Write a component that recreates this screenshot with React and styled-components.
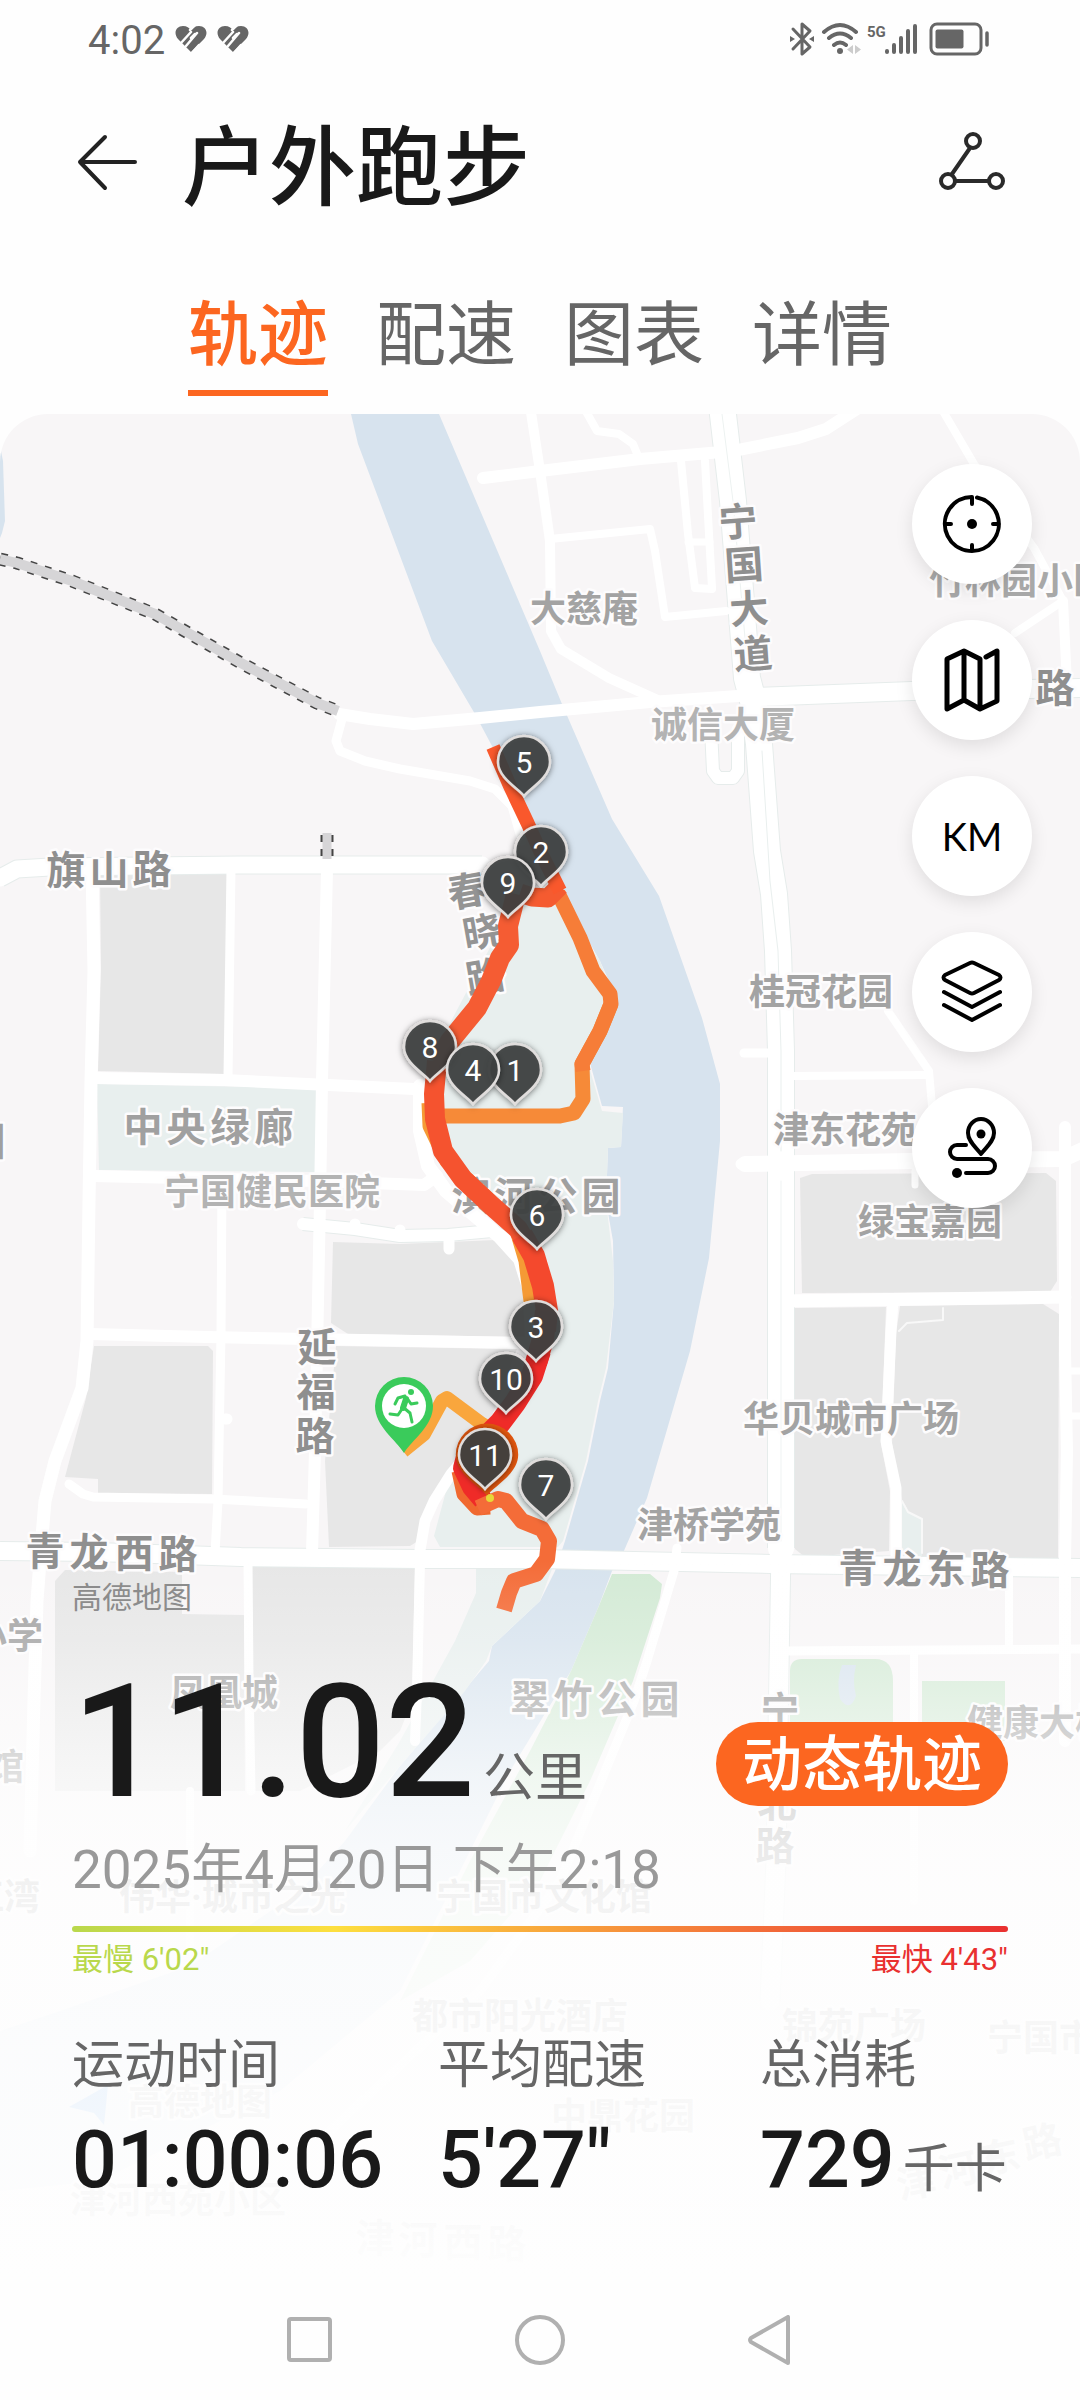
import React from "react";
import styled, { createGlobalStyle, css } from "styled-components";

const sans = `Roboto, "Noto Sans CJK SC", sans-serif`;

const GlobalStyle = createGlobalStyle`
  * { box-sizing: border-box; }
  body { margin: 0; background: #fefefe; font-family: ${sans}; color: #191919; }
  button { margin: 0; padding: 0; border: 0; background: none; font: inherit; color: inherit; cursor: pointer; }
  svg { display: block; }
`;

const Page = styled.div`
  min-height: 100vh;
  display: flex;
  flex-direction: column;
`;

/* ---------- status bar ---------- */

const StatusBar = styled.div`
  display: flex;
  align-items: center;
  justify-content: space-between;
  height: 78px;
  padding: 0 88px;
  color: #666;
`;

const StatusGroup = styled.div`
  display: flex;
  align-items: center;
  gap: ${(p) => p.$gap}px;
`;

const Clock = styled.span`
  padding-top: 4px;
  font-size: 40px;
  line-height: 48px;
`;

const HeartIcon = () => (
  <svg width="32" height="28" viewBox="0 0 32 28">
    <path fill="#666" d="M16 27 L3 14 C-2 8 1 1 8 1 C12 1 14 3 16 5 C18 3 20 1 24 1 C31 1 34 8 29 14Z" />
    <path fill="none" stroke="#fefefe" strokeWidth="2.500" strokeLinecap="round" d="M6 18 L16 7 M11 21 L22 8 M16 13 L20 9 M24 20 L16 29 M19 1 L15 5" />
  </svg>
);

const SystemIcons = () => (
  <svg width="202" height="36" viewBox="790 21 202 36" fill="none" stroke="#666" strokeLinecap="round" strokeLinejoin="round">
    <path strokeWidth="3" d="M793 29 L810 47 L802 54 V24 L810 31 L793 49" />
    <path fill="#666" stroke="none" d="M790 36 l5 3 l-5 3z M814 36 l-5 3 l5 3z" />
    <path strokeWidth="4" d="M824 32 Q840 18 856 32 M829 38 Q840 29 851 38 M834 45 Q840 40 846 45" />
    <circle cx="840" cy="51" r="3" fill="#666" stroke="none" />
    <path fill="#ccc" stroke="none" d="M853 45 v9 l-6 -4.500z M855 45 v9 l6 -4.500z" />
    <text x="867" y="37" fontFamily="Roboto, sans-serif" fontSize="15" fontWeight="700" fill="#666" stroke="none">5G</text>
    <path strokeWidth="4" d="M887 51 V52 M894 45 V52 M901 38 V52 M908 31 V52 M915 26 V52" />
    <rect x="931" y="24" width="50" height="30" rx="6" strokeWidth="3" />
    <rect x="935.500" y="29.500" width="28" height="19" rx="2" fill="#666" stroke="none" />
    <path strokeWidth="3.500" d="M987 33 V45" />
  </svg>
);

/* ---------- header and tabs ---------- */

const Header = styled.header`
  display: flex;
  align-items: center;
  gap: 40px;
  height: 172px;
  padding: 0 72px;
`;

const Title = styled.h1`
  flex: 1;
  margin: 0;
  padding-top: 10px;
  font-size: 87px;
  line-height: 120px;
  font-weight: 500;
`;

const IconButton = styled.button`
  display: grid;
  place-items: center;
  width: 70px;
  height: 70px;
`;

const Tabs = styled.nav`
  display: flex;
  justify-content: center;
  gap: 48px;
  padding: 36px 24px 18px;
`;

const Tab = styled.button`
  padding-bottom: 4px;
  border-bottom: 6px solid transparent;
  font-size: 70px;
  line-height: 100px;
  color: #666;
  ${(p) =>
    p.$active &&
    css`
      color: #fc6620;
      font-weight: 500;
      border-image: linear-gradient(#fc6620, #fc6620) 1;
    `}
`;

/* ---------- map stage ---------- */

const Stage = styled.main`
  position: relative;
  flex: 1;
  display: flex;
  flex-direction: column;
  padding-top: 50px;
  border-radius: 48px 48px 0 0;
  overflow: hidden;
  background: #f8f6f7;
`;

const Backdrop = styled.div`
  position: absolute;
  inset: 0;
  svg { width: 100%; height: 100%; }
`;

const Tools = styled.div`
  position: relative;
  align-self: flex-end;
  display: flex;
  flex-direction: column;
  gap: 36px;
  margin-right: 48px;
`;

const ToolButton = styled.button`
  display: grid;
  place-items: center;
  width: 120px;
  height: 120px;
  border-radius: 50%;
  background: #fff;
  color: #000;
  box-shadow: 0 6px 18px rgba(0, 0, 0, 0.1);
  font-family: Lato, sans-serif;
  font-size: 38px;
`;

/* ---------- summary panel ---------- */

const Summary = styled.section`
  position: relative;
  margin-top: auto;
  padding: 0 72px 80px;
`;

const Attribution = styled.div`
  font-size: 30px;
  line-height: 40px;
  color: #8c8c8c;
`;

const DistanceRow = styled.div`
  display: flex;
  align-items: flex-end;
  justify-content: space-between;
  margin-top: 44px;
`;

const Distance = styled.div`
  display: flex;
  align-items: baseline;
  gap: 8px;
  height: 160px;
`;

const DistanceValue = styled.span`
  font-size: 158px;
  line-height: 160px;
  font-weight: 500;
`;

const Unit = styled.span`
  font-size: 52px;
  line-height: 64px;
  color: #666;
`;

const PlayButton = styled.button`
  height: 84px;
  margin-bottom: 16px;
  padding: 4px 26px 0;
  border-radius: 42px;
  background: #fc6620;
  color: #fff;
  font-size: 60px;
  line-height: 80px;
  font-weight: 500;
`;

const DateLine = styled.time`
  display: block;
  margin-top: 16px;
  font-size: 53px;
  line-height: 64px;
  color: #999;
`;

const PaceBar = styled.div`
  height: 6px;
  margin-top: 24px;
  border-radius: 3px;
  background: linear-gradient(90deg, #b9d84c, #fddf3f 28%, #f8a43c 52%, #f3703a 72%, #e93030);
`;

const PaceLegend = styled.div`
  display: flex;
  justify-content: space-between;
  margin-top: 8px;
  font-size: 31px;
  line-height: 40px;
`;

const PaceLabel = styled.span`
  color: ${(p) => p.$color};
`;

const Stats = styled.dl`
  display: grid;
  grid-template-columns: 366fr 322fr 248fr;
  margin: 54px 0 0;
`;

const StatLabel = styled.dt`
  font-size: 52px;
  line-height: 64px;
  color: #666;
`;

const StatValue = styled.dd`
  display: flex;
  align-items: baseline;
  gap: 8px;
  height: 80px;
  margin: 22px 0 0;
  font-size: 79px;
  line-height: 80px;
  font-weight: 500;
  white-space: nowrap;
  ${Unit} { font-weight: 400; }
`;

const SystemNav = styled.nav`
  display: flex;
  justify-content: center;
  align-items: center;
  gap: 180px;
  height: 120px;
`;

const NavButton = styled.button`
  width: 50px;
  height: 50px;
`;

/* ---------- map data ---------- */

const GREY = "#e7e7e7";
const PARK = "#e8efee";
const WATER = "#d7e3ee";
const GREEN = "#d3ead5";

const areas = [
  [WATER, "351,413 358,443 432,640 475,713 492,745 520,800 545,860 566,900 600,960 618,1000 590,1062 602,1105 623,1106 621,1146 608,1147 606,1200 613,1240 614,1300 608,1367 600,1400 588,1460 565,1540 555,1570 540,1600 492,1645 489,1660 400,1765 345,1840 300,1890 190,1965 60,2010 0,2030 0,2190 100,2180 280,2090 400,1990 510,1770 571,1670 598,1607 612,1570 623,1552 647,1497 690,1350 709,1257 720,1140 720,1083 702,1017 659,895 612,818 562,703 540,650 439,413"],
  [WATER, "0,445 3,460 5,520 2,532 0,537"],
  [PARK, "512,905 560,900 600,960 615,1000 588,1062 602,1110 623,1112 621,1146 608,1147 606,1200 613,1260 614,1300 606,1367 598,1400 586,1460 563,1540 558,1546 440,1546 434,1535 446,1490 470,1450 553,1320 548,1260 500,1215 450,1170 432,1120 430,1060"],
  [PARK, "476,1568 552,1568 540,1600 492,1645 486,1660 465,1690 400,1765 345,1830 400,1740 455,1640 476,1592"],
  [GREEN, "612,1573 650,1573 662,1583 660,1597 633,1680 590,1780 540,1880 470,1960 400,2000 470,1860 530,1750 571,1670 598,1607"],
  [GREY, "100,873 227,873 225,1073 98,1070 101,967"],
  [PARK, "97,1083 316,1087 316,1171 99,1169"],
  [GREY, "333,1241 400,1243 496,1239 520,1263 530,1300 530,1336 348,1333 331,1322"],
  [GREY, "94,1345 208,1345 213,1350 212,1493 98,1492 98,1478 65,1476 86,1397"],
  [GREY, "336,1345 517,1348 490,1420 451,1470 434,1500 418,1540 410,1545 329,1546 325,1460"],
  [GREY, "65,1569 182,1571 182,1613 244,1614 245,1790 55,1790 55,1580"],
  [GREY, "252,1563 415,1565 412,1700 400,1730 380,1750 300,1790 252,1790"],
  [GREY, "800,1177 812,1173 1046,1172 1056,1180 1057,1280 1050,1291 802,1292"],
  [GREY, "795,1307 886,1306 881,1443 890,1490 889,1550 805,1556 795,1548"],
  [GREY, "900,1305 1043,1303 1059,1313 1058,1557 922,1557 902,1500 892,1443 896,1333"],
  [PARK, "902,1500 908,1511 922,1518 922,1557 902,1557"],
];

const cased = [
  [17, "0,877 17,868 50,866 240,864 482,864"],
  [18, "0,1550 96,1551 241,1556 420,1558 540,1558 771,1563 1080,1567"],
  [18, "753,696 912,690 1080,687"],
  [12, "711,728 713,770 718,777 733,777 738,770 738,728"],
  [26, "722,405 733,500 747,677 753,700 759,743 767,850 774,893 778,950 781,1050 781,1547"],
  [19, "781,1547 779,1667 776,1860 770,2000"],
  [12, "303,1223 355,1228 400,1235 448,1234 492,1230 512,1240"],
];

const roads = [
  [12, "339,713 370,718 413,723 480,717 540,711 650,701 753,694"],
  [9, "342,718 336,740 340,750 365,760 400,768 470,780 495,788 512,805 522,840"],
  [10, "455,864 530,864"],
  [13, "92,868 94,970 91,1080 89,1200 87,1340 82,1387 55,1460 45,1500 41,1547 37,1600 34,1700 30,1850"],
  [9, "231,868 228,1075"],
  [12, "327,868 322,1080 320,1200 318,1300 315,1450 312,1552"],
  [9, "222,1180 221,1333 218,1500 215,1552"],
  [12, "95,1077 224,1079 414,1088"],
  [12, "93,1175 317,1180 424,1184 437,1175"],
  [14, "420,1085 420,1130 428,1165 446,1190 500,1236 520,1258 530,1290 532,1340"],
  [12, "90,1333 207,1336 525,1342"],
  [9, "69,1483 83,1493 93,1496 213,1498 306,1503"],
  [9, "248,1560 249,1680 251,1790"],
  [10, "420,1560 417,1690 415,1740"],
  [11, "419,1555 425,1520 434,1500 451,1473 470,1450"],
  [12, "483,477 540,470 640,458 733,450 798,437 826,428 857,408"],
  [10, "530,405 540,470 550,540 551,630 561,648 609,677 660,700"],
  [8, "583,405 597,430 619,433 633,443 638,455"],
  [8, "681,460 688,533 695,587 712,588"],
  [8, "705,460 709,533 712,587"],
  [7, "688,541 710,541"],
  [8, "550,538 650,528 655,550 665,616 726,610"],
  [8, "940,405 974,463 1034,547 1063,600 1015,632"],
  [10, "1063,600 1067,683"],
  [8, "888,1010 929,1070 932,1105"],
  [8, "793,1075 929,1074"],
  [9, "744,1052 769,1052"],
  [16, "745,1163 912,1160 1063,1158 1085,1148"],
  [12, "1065,1126 1065,1350 1067,1450 1065,1560 1065,1740"],
  [13, "781,1300 1065,1296"],
  [11, "893,1300 891,1330 886,1440 896,1487 896,1557"],
  [7, "1065,1370 1080,1370"],
  [7, "1065,1415 1080,1415"],
  [9, "785,1650 1080,1648"],
  [8, "1009,1573 1009,1647"],
  [8, "914,1653 914,1900"],
  [9, "677,1547 674,1570 647,1660 634,1700 560,1880 480,1990 330,2130"],
  [8, "190,1790 190,1950"],
  [7, "915,1184 915,1170"],
];

const route = [
  ["#f9a63d", 14, "403,1450 424,1433 442,1400 447,1397 482,1423 500,1434"],
  ["#f59a35", 15, "429,1102 430,1125 447,1160 490,1200 516,1226 526,1260 531,1300"],
  ["#f68a38", 15, "440,1115 560,1115 574,1112 583,1098 582,1063 600,1030 611,1003"],
  ["#f67d38", 15, "583,1070 582,1063 600,1030 611,1003 610,993 593,970 580,937 558,892"],
  ["#f55b30", 19, "560,885 548,897 532,896 520,892"],
  ["#f9582c", 14, "493,746 510,785 528,823 540,850 560,890"],
  ["#f55c33", 20, "516,893 508,925 509,944 500,957 491,980 477,1007 450,1040 437,1062"],
  ["#f5532f", 20, "437,1060 434,1093 435,1118 443,1150 463,1178 492,1205 518,1228 528,1245"],
  ["#f4492d", 22, "522,1234 534,1255 543,1285 547,1310 545,1330"],
  ["#f0692f", 15, "459,1470 464,1493 477,1507 490,1506"],
  ["#f23a29", 22, "546,1310 543,1338 536,1362"],
  ["#ef2b28", 22, "540,1350 532,1375 515,1402 500,1422 480,1442 465,1458"],
  ["#ef2b28", 20, "467,1452 463,1467 472,1486 483,1499"],
  ["#f46c38", 16, "478,1507 498,1498 506,1500 522,1520 542,1528 549,1540 547,1558 536,1573 514,1580 509,1592 504,1609"],
];

const kmPins = [
  [5, 524, 762], [2, 541, 852], [9, 508, 883], [8, 430, 1047], [1, 515, 1070], [4, 473, 1070],
  [6, 537, 1215], [3, 536, 1327], [10, 506, 1379], [7, 546, 1485],
];

const places = [
  ["大慈庵", 530, 608, "#a3a3a3"],
  ["竹林园小区", 929, 580, "#a8a8a8"],
  ["诚信大厦", 651, 724, "#b3b3b3"],
  ["桂冠花园", 749, 991, "#a3a3a3"],
  ["津东花苑", 773, 1129, "#a3a3a3"],
  ["绿宝嘉园", 858, 1221, "#a3a3a3"],
  ["宁国健民医院", 164, 1191, "#b3b3b3"],
  ["华贝城市广场", 743, 1418, "#a3a3a3"],
  ["津桥学苑", 637, 1524, "#a3a3a3"],
  ["小学", -29, 1635, "#a3a3a3"],
  ["凤凰城", 170, 1692, "#a0a0a0"],
  ["馆", -12, 1766, "#a3a3a3"],
  ["健康大楼", 967, 1722, "#a3a3a3"],
  ["江湾", -32, 1896, "#a3a3a3"],
  ["伟华·城市之光", 119, 1896, "#a3a3a3"],
  ["宁国市文化馆", 436, 1896, "#a3a3a3"],
  ["都市阳光酒店", 412, 2015, "#a3a3a3"],
  ["锦苑广场", 782, 2025, "#a3a3a3"],
  ["宁国市", 987, 2037, "#a3a3a3"],
  ["高德地图", 128, 2101, "#a3a3a3"],
  ["中鼎花园", 551, 2115, "#a3a3a3"],
  ["津河西苑小区", 70, 2199, "#a3a3a3"],
];

/* Street and park names run along their road, one anchor per character. */
const streets = [
  ["旗山路", "#8f8f8f", [[66, 868], [109, 868], [152, 867]], 0],
  ["青龙西路", "#8f8f8f", [[45, 1549], [89, 1550], [134, 1551], [178, 1552]], 0],
  ["青龙东路", "#8f8f8f", [[858, 1566], [902, 1567], [946, 1567], [990, 1568]], 0],
  ["宁国大道", "#8f8f8f", [[738, 520], [744, 563], [749, 607], [753, 652]], -4],
  ["延福路", "#8f8f8f", [[317, 1345], [316, 1390], [315, 1434]], 0],
  ["春晓路", "#949494", [[467, 889], [482, 930], [485, 975]], -10],
  ["路", "#8f8f8f", [[1055, 686]], 0],
  ["中央绿廊", "#a0a0a0", [[143, 1125], [186, 1125], [230, 1125], [274, 1125]], 0],
  ["滨河公园", "#a0a0a0", [[471, 1194], [514, 1194], [558, 1194], [601, 1194]], 0],
  ["翠竹公园", "#a0a0a0", [[530, 1697], [573, 1697], [617, 1697], [660, 1697]], 0],
  ["宁国北路", "#8f8f8f", [[780, 1709], [779, 1756], [777, 1801], [775, 1844]], 0],
  ["园", "#a0a0a0", [[-14, 1139]], 0],
  ["津河西路", "#a0a0a0", [[375, 2236], [418, 2238], [463, 2240], [507, 2242]], 0],
  ["津河东路", "#a0a0a0", [[916, 2180], [958, 2168], [1000, 2155], [1042, 2140]], -12],
];

const MapLabel = styled.text`
  font-family: ${sans};
  font-weight: 700;
  font-size: ${(p) => p.$size}px;
  stroke: #fdfcfd;
  stroke-width: 5px;
  stroke-linejoin: round;
  paint-order: stroke;
`;

const PinNumber = styled.text`
  font-family: Roboto, sans-serif;
  font-size: 30px;
  fill: #fff;
  text-anchor: middle;
`;

const pinPath = "M0 33 C-5 26 -26 15 -26 -1 A26 26 0 0 1 26 -1 C26 15 5 26 0 33Z";

const KmPin = ({ n, x, y }) => (
  <g transform={`translate(${x} ${y})`}>
    <path d={pinPath} fill="rgba(62,65,65,0.9)" stroke="#e0dddc" strokeWidth="2.500" filter="url(#pinShadow)" />
    <PinNumber y="10">{n}</PinNumber>
  </g>
);

const TrackMap = () => (
  <svg viewBox="0 413 1080 1866" preserveAspectRatio="xMidYMin slice" role="img" aria-label="轨迹地图">
    <defs>
      <linearGradient id="fade" x1="0" y1="1560" x2="0" y2="2280" gradientUnits="userSpaceOnUse">
        <stop offset="0" stopColor="#fefefe" stopOpacity="0" />
        <stop offset="0.110" stopColor="#fefefe" stopOpacity="0.180" />
        <stop offset="0.200" stopColor="#fefefe" stopOpacity="0.420" />
        <stop offset="0.300" stopColor="#fefefe" stopOpacity="0.680" />
        <stop offset="0.400" stopColor="#fefefe" stopOpacity="0.820" />
        <stop offset="0.470" stopColor="#fefefe" stopOpacity="0.880" />
        <stop offset="0.640" stopColor="#fefefe" stopOpacity="0.920" />
        <stop offset="0.900" stopColor="#fefefe" stopOpacity="0.950" />
        <stop offset="1" stopColor="#fefefe" stopOpacity="1" />
      </linearGradient>
      <filter id="pinShadow" x="-30%" y="-30%" width="160%" height="160%">
        <feDropShadow dx="0" dy="1" stdDeviation="3" floodColor="#000" floodOpacity="0.550" />
      </filter>
    </defs>

    {areas.map(([fill, points], i) => <polygon key={i} fill={fill} points={points} />)}
    <path fill={GREEN} d="M790 1760 V1670 Q790 1658 802 1658 H875 Q893 1658 893 1680 V1760Z M922 1680 H1005 V1740 H922Z" />
    <path fill={WATER} d="M842 1664 H856 Q852 1680 856 1695 Q850 1712 840 1698 Q836 1680 842 1664Z" />

    <g fill="none" strokeLinejoin="round" strokeLinecap="round">
      {cased.map(([w, points], i) => <polyline key={i} points={points} stroke="#e6eceb" strokeWidth={w + 2} strokeLinecap="butt" />)}
      {roads.map(([w, points], i) => <polyline key={i} points={points} stroke="#fff" strokeWidth={w} />)}
      {cased.map(([w, points], i) => <polyline key={i} points={points} stroke="#fff" strokeWidth={w} />)}
      <polyline points="722,413 733,500 747,660" stroke="#edf2f1" strokeWidth="1" />
      <polyline points="762,750 770,880 778,950 781,1050 781,1150" stroke="#e9efee" strokeWidth="1" />
      <polyline points="781,1180 781,1540" stroke="#eff3f3" strokeWidth="1" />
      <path d="M355 1223 V1226 M400 1229 V1232 M449 1240 V1248 M225 1418 H227 M741 1163 H745" stroke="#fff" strokeWidth="11" />
      <path d="M899 1330 L907 1322 L943 1319 V1307 M902 1500 L908 1511 L922 1518 V1552" stroke="#f8f8f8" strokeWidth="2" />
    </g>

    <g fill="none" strokeLinejoin="round">
      <path d="M0 558 L17 562 L72 580 L155 613 L241 662 L317 702 L338 710" stroke="#444" strokeWidth="13" strokeDasharray="7 8" />
      <path d="M0 558 L17 562 L72 580 L155 613 L241 662 L317 702 L338 710" stroke="#d6d5d7" strokeWidth="10" />
      <path d="M327 834 V858" stroke="#444" strokeWidth="13" strokeDasharray="7 7" />
      <path d="M327 832 V858" stroke="#d6d5d7" strokeWidth="9" />
    </g>

    {places.map(([name, x, y, fill]) => (
      <MapLabel key={name} $size={36} x={x} y={y + 13} fill={fill}>{name}</MapLabel>
    ))}
    {streets.map(([name, fill, anchors, angle]) => (
      <g key={name}>
        {anchors.map(([x, y], i) => (
          <MapLabel key={i} $size={39} x={x} y={y + 15} fill={fill} textAnchor="middle" transform={`rotate(${angle} ${x} ${y})`}>
            {name[i]}
          </MapLabel>
        ))}
      </g>
    ))}
    <path d="M69 2106 L108 2084 L104 2124 L94 2112Z" fill="#3b8fe8" />

    <g fill="none" strokeLinejoin="round">
      {route.map(([stroke, w, points], i) => <polyline key={i} points={points} stroke={stroke} strokeWidth={w} />)}
    </g>
    <circle cx="490" cy="1497" r="4" fill="#e8d838" />

    {kmPins.map(([n, x, y]) => <KmPin key={n} n={n} x={x} y={y} />)}
    <path transform="translate(487 1455) scale(1.200)" d={pinPath} fill="#e2570f" />
    <KmPin n={11} x={485} y={1455} />

    <g transform="translate(404 1405)">
      <path d="M0 47 C-8 34 -29 20 -29 0 A29 29 0 0 1 29 0 C29 20 8 34 0 47Z" fill="#3acb5b" />
      <circle r="22" fill="#fff" />
      <g fill="none" stroke="#3acb5b" strokeLinecap="round" strokeLinejoin="round">
        <circle cx="7" cy="-14" r="3" fill="#3acb5b" stroke="none" />
        <path strokeWidth="6" d="M2 -7 L-1 2" />
        <path strokeWidth="3" d="M1 -10 L-6 -8 L-9 -2 M3 -8 L7 -2 L13 -3 M-2 3 L-6 9 L-14 8 M0 2 L6 7 L8 16" />
      </g>
    </g>

    <rect x="-2000" y="1560" width="5080" height="720" fill="url(#fade)" />
  </svg>
);

/* ---------- tool icons ---------- */

const ToolIcon = ({ children }) => (
  <svg width="64" height="64" viewBox="0 0 64 64" fill="none" stroke="currentColor" strokeWidth="4" strokeLinecap="round" strokeLinejoin="round">
    {children}
  </svg>
);

const tools = [
  ["定位", <ToolIcon><path d="M37 5.500 A27 27 0 1 1 32 5 V12 M5 32 H11 M59 32 H53 M32 59 V53" /><circle cx="32" cy="32" r="5" fill="currentColor" stroke="none" /></ToolIcon>],
  ["地图类型", <ToolIcon><path strokeWidth="5" d="M46 9 L57 3 V53 L40 61 L24 52 L7 61 V11 L24 3 L40 11 V60 M24 3 V52" /></ToolIcon>],
  ["公里标记", "KM"],
  ["图层", <ToolIcon><path d="M30 3 Q32 2 34 3 L59 15 Q62 17.500 59 20 L34 33 Q32 34 30 33 L5 20 Q2 17.500 5 15Z M4 32 L32 47 L60 32 M4 45 L32 60 L60 45" /></ToolIcon>],
  ["路线", <ToolIcon><path d="M41 38 C37 32 28 26 28 17 A13 14 0 0 1 54 17 C54 26 45 32 41 38Z M26 29 H17 A7 7 0 0 0 17 43 H48 A7 7 0 0 1 48 57 H26" /><circle cx="41" cy="18" r="4.500" fill="currentColor" stroke="none" /><circle cx="17" cy="57" r="5" fill="currentColor" stroke="none" /></ToolIcon>],
];

const tabs = ["轨迹", "配速", "图表", "详情"];

const stats = [
  ["运动时间", "01:00:06"],
  ["平均配速", "5'27\""],
  ["总消耗", "729", "千卡"],
];

export default function App() {
  return (
    <Page>
      <GlobalStyle />
      <StatusBar>
        <StatusGroup $gap={10}>
          <Clock>4:02</Clock>
          <HeartIcon />
          <HeartIcon />
        </StatusGroup>
        <SystemIcons />
      </StatusBar>

      <Header>
        <IconButton aria-label="返回">
          <svg width="70" height="60" viewBox="0 0 70 60" fill="none" stroke="#222" strokeWidth="4" strokeLinecap="round" strokeLinejoin="round">
            <path d="M63 28 H8 M33 3 L8 28 L33 54" />
          </svg>
        </IconButton>
        <Title>户外跑步</Title>
        <IconButton aria-label="分享">
          <svg width="68" height="64" viewBox="0 0 68 64" fill="none" stroke="#2a2a2a" strokeWidth="4" strokeLinecap="round">
            <circle cx="34" cy="9" r="7" />
            <circle cx="9" cy="49" r="7" />
            <circle cx="57" cy="49" r="7" />
            <path d="M31 16 L13 42 M17 49 H49" />
          </svg>
        </IconButton>
      </Header>

      <Tabs>
        {tabs.map((name, i) => <Tab key={name} $active={i === 0}>{name}</Tab>)}
      </Tabs>

      <Stage>
        <Backdrop><TrackMap /></Backdrop>
        <Tools>
          {tools.map(([label, icon]) => <ToolButton key={label} aria-label={label}>{icon}</ToolButton>)}
        </Tools>

        <Summary>
          <Attribution>高德地图</Attribution>
          <DistanceRow>
            <Distance>
              <DistanceValue>11.02</DistanceValue>
              <Unit>公里</Unit>
            </Distance>
            <PlayButton>动态轨迹</PlayButton>
          </DistanceRow>
          <DateLine dateTime="2025-04-20T14:18">2025年4月20日 下午2:18</DateLine>
          <PaceBar />
          <PaceLegend>
            <PaceLabel $color="#b9d84c">最慢 6'02"</PaceLabel>
            <PaceLabel $color="#e93030">最快 4'43"</PaceLabel>
          </PaceLegend>
          <Stats>
            {stats.map(([label, value, unit]) => (
              <div key={label}>
                <StatLabel>{label}</StatLabel>
                <StatValue>{value}{unit && <Unit>{unit}</Unit>}</StatValue>
              </div>
            ))}
          </Stats>
        </Summary>
      </Stage>

      <SystemNav>
        <NavButton aria-label="最近任务">
          <svg width="50" height="50" viewBox="0 0 50 50" fill="none" stroke="#b0b0b0" strokeWidth="4"><rect x="4" y="4" width="41" height="41" rx="2" /></svg>
        </NavButton>
        <NavButton aria-label="主屏幕">
          <svg width="50" height="50" viewBox="0 0 50 50" fill="none" stroke="#b0b0b0" strokeWidth="4"><circle cx="25" cy="25" r="23" /></svg>
        </NavButton>
        <NavButton aria-label="返回上一页">
          <svg width="50" height="50" viewBox="0 0 50 50" fill="none" stroke="#b0b0b0" strokeWidth="4" strokeLinejoin="round"><path d="M43 2 V48 L6 27 Q4 25 6 23Z" /></svg>
        </NavButton>
      </SystemNav>
    </Page>
  );
}
